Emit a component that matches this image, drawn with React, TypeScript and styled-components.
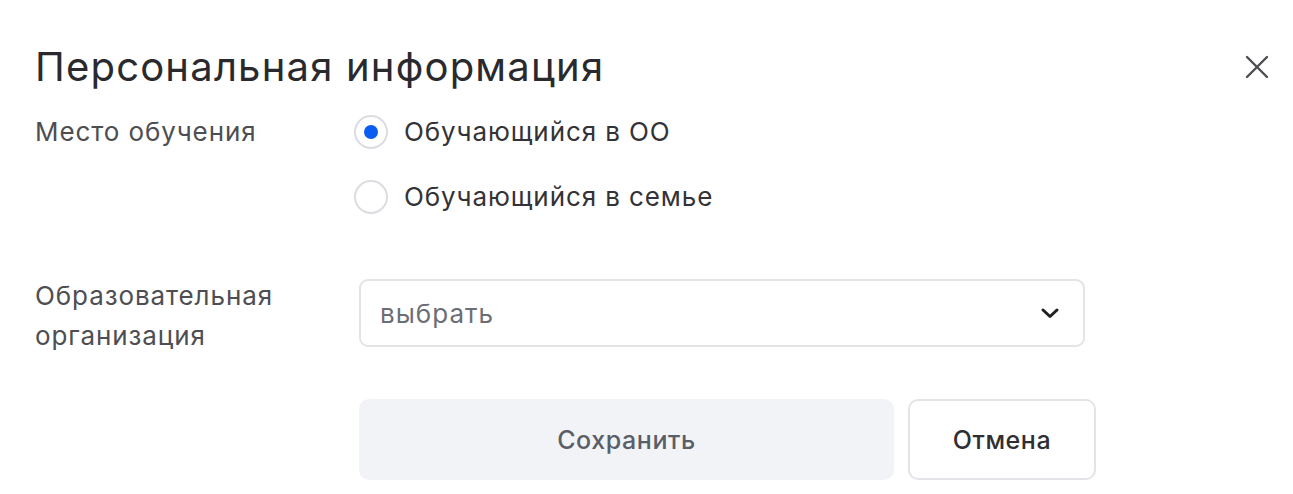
import React, { useState } from "react";
import styled, { createGlobalStyle } from "styled-components";

const GlobalStyle = createGlobalStyle`
  html, body {
    margin: 0;
    padding: 0;
    background: #ffffff;
  }
  body {
    font-family: Inter, "Noto Sans", Arial, sans-serif;
    color: #2b2b2b;
  }
  * {
    box-sizing: border-box;
  }
`;

const options = ["Обучающийся в ОО", "Обучающийся в семье"];

const App = () => {
  const [place, setPlace] = useState(0);
  return (
    <Modal>
      <GlobalStyle />
      <Header>
        <Title>Персональная информация</Title>
        <CloseButton aria-label="Закрыть">
          <svg width="26" height="26" viewBox="0 0 26 26" fill="none">
            <path d="M3 3L23 23M23 3L3 23" stroke="#4d4d52" strokeWidth="2.4" strokeLinecap="round" />
          </svg>
        </CloseButton>
      </Header>

      <FieldRow>
        <Label>Место обучения</Label>
        <RadioGroup>
          {options.map((opt, i) => (
            <RadioOption key={opt} onClick={() => setPlace(i)}>
              <RadioCircle checked={place === i} />
              <RadioText>{opt}</RadioText>
            </RadioOption>
          ))}
        </RadioGroup>
      </FieldRow>

      <SelectRow>
        <Label>
          Образовательная
          <br />
          организация
        </Label>
        <Select>
          <Placeholder>выбрать</Placeholder>
          <svg width="22" height="14" viewBox="0 0 22 14" fill="none">
            <path d="M4 4L11 10.5L18 4" stroke="#1f1f1f" strokeWidth="3" strokeLinecap="round" strokeLinejoin="round" />
          </svg>
        </Select>
      </SelectRow>

      <Actions>
        <SaveButton disabled>Сохранить</SaveButton>
        <CancelButton>Отмена</CancelButton>
      </Actions>
    </Modal>
  );
};

export default App;

const Modal = styled.div`
  width: 1293px;
  height: 494px;
  padding: 44px 0 0 35px;
  background: #ffffff;
`;

const Header = styled.div`
  display: flex;
  justify-content: space-between;
  align-items: center;
  width: 1237px;
`;

const Title = styled.h1`
  margin: 0;
  font-size: 40px;
  line-height: 46px;
  font-weight: 400;
  color: #2a2a2e;
  letter-spacing: 1.2px;
`;

const CloseButton = styled.button`
  display: flex;
  align-items: center;
  justify-content: center;
  width: 30px;
  height: 30px;
  padding: 0;
  border: none;
  background: none;
  cursor: pointer;
`;

const FieldRow = styled.div`
  display: grid;
  grid-template-columns: 319px 1fr;
  margin-top: 25px;
`;

const SelectRow = styled(FieldRow)`
  grid-template-columns: 324px 1fr;
  margin-top: 65px;
`;

const Label = styled.div`
  font-size: 26px;
  line-height: 40px;
  letter-spacing: 0.9px;
  color: #4e4e52;
  margin-top: -3px;
`;

const RadioGroup = styled.div`
  display: flex;
  flex-direction: column;
  gap: 31px;
`;

const RadioOption = styled.label`
  display: flex;
  align-items: center;
  gap: 16px;
  cursor: pointer;
`;

const RadioCircle = styled.span<{ checked: boolean }>`
  display: flex;
  align-items: center;
  justify-content: center;
  width: 34px;
  height: 34px;
  border-radius: 50%;
  border: 2px solid #dcdde2;
  background: #ffffff;
  &::after {
    content: "";
    width: 14px;
    height: 14px;
    border-radius: 50%;
    background: ${(p) => (p.checked ? "#0b5cf0" : "transparent")};
  }
`;

const RadioText = styled.span`
  font-size: 26px;
  line-height: 34px;
  letter-spacing: 0.9px;
  color: #333337;
`;

const Select = styled.div`
  display: flex;
  align-items: center;
  justify-content: space-between;
  width: 726px;
  height: 68px;
  padding: 0 22px 0 19px;
  border: 2px solid #e3e4e8;
  border-radius: 9px;
  cursor: pointer;
`;

const Placeholder = styled.span`
  font-size: 26px;
  letter-spacing: 1px;
  color: #6d6e75;
`;

const Actions = styled.div`
  display: flex;
  gap: 14px;
  margin-top: 43px;
  margin-left: 324px;
`;

const ButtonBase = styled.button`
  height: 81px;
  border-radius: 10px;
  font-family: Inter, "Noto Sans", Arial, sans-serif;
  font-size: 25px;
  letter-spacing: 0.6px;
  font-weight: 500;
  cursor: pointer;
`;

const SaveButton = styled(ButtonBase)`
  width: 535px;
  border: none;
  background: #f1f3f6;
  color: #5a5e68;
  &:disabled {
    cursor: default;
  }
`;

const CancelButton = styled(ButtonBase)`
  width: 188px;
  border: 2px solid #e3e4e8;
  background: #ffffff;
  color: #2f2f33;
`;
